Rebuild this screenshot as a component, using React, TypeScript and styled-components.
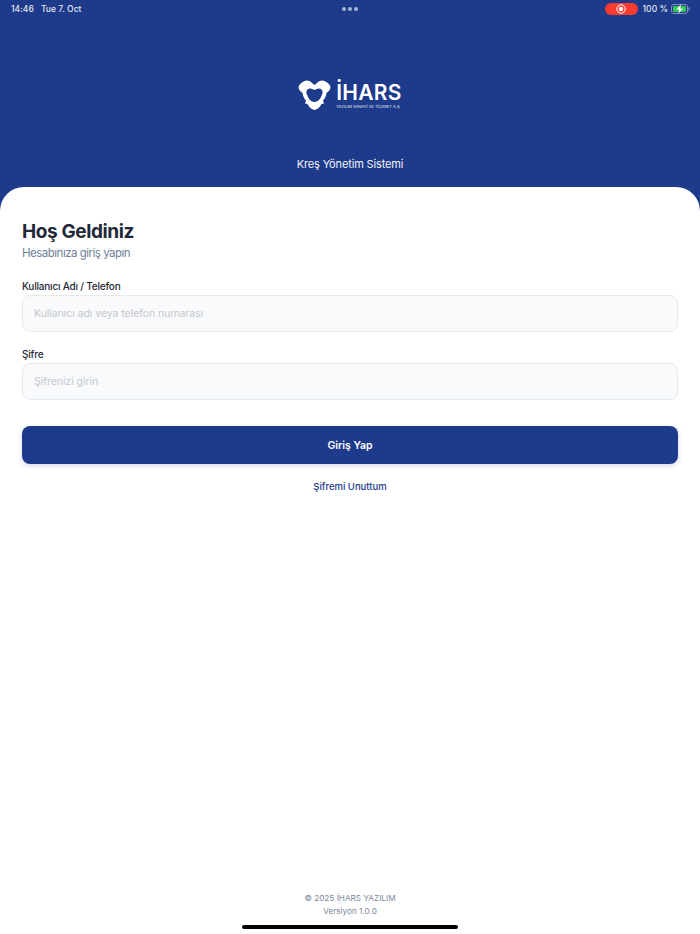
import React from "react";
import styled, { createGlobalStyle } from "styled-components";

const Global = createGlobalStyle`
  html, body { margin: 0; padding: 0; background: #fff; }
  * { box-sizing: border-box; }
  body { font-family: Inter, "Noto Sans", sans-serif; }
`;

const Page = styled.div`
  width: 700px; height: 934px; display: flex; flex-direction: column;
  background: #1e3a8a; overflow: hidden; position: relative;
`;
const StatusBar = styled.div`
  height: 17px; padding: 0 11px; display: grid; grid-template-columns: 1fr auto 1fr;
  align-items: center; color: #e3e7f2; font-size: 8.5px; font-weight: 500; letter-spacing: .05px;
`;
const StatusLeft = styled.div`display: flex; gap: 7px;`;
const StatusRight = styled.div`display: flex; align-items: center; justify-content: flex-end; margin-right: -1px;`;
const BatteryText = styled.span`margin: 0 3px 0 5px;`;
const Dots = styled.div`display: flex; gap: 2px;`;
const Dot = styled.span`width: 4px; height: 4px; border-radius: 50%; background: #aab5d6;`;
const Record = styled.div`
  width: 33px; height: 12px; border-radius: 6px; background: #fb3b30;
  display: flex; align-items: center; justify-content: center;
`;
const Header = styled.header`
  height: 170px; display: flex; flex-direction: column; align-items: center;
`;
const Logo = styled.div`display: flex; align-items: flex-start; gap: 5px; margin-top: 63px; height: 30px; color: #fff;`;
const WordBox = styled.div`display: flex; flex-direction: column; align-items: flex-start; margin-top: 2px;`;
const Word = styled.div`font-size: 21px; line-height: 21px; font-weight: 600; letter-spacing: .3px;`;
const Tagline = styled.div`font-size: 4px; line-height: 5px; margin-top: 1px; color: #e7eaf4; white-space: nowrap;`;
const Subtitle = styled.div`margin-top: 46px; font-size: 11px; line-height: 16px; color: #f1f3f9; letter-spacing: -.15px;`;
const Card = styled.main`
  flex: 1; background: #fff; border-radius: 24px 24px 0 0; padding: 32px 22px 0;
  display: flex; flex-direction: column;
`;
const Title = styled.h1`margin: 0; font-size: 19px; line-height: 26px; font-weight: 700; color: #1f2937; letter-spacing: -.4px;`;
const Sub = styled.p`margin: 0 0 18px; font-size: 11.5px; line-height: 16px; color: #70809a; letter-spacing: -.5px;`;
const Field = styled.div`margin-bottom: 15px;`;
const Label = styled.label`display: block; font-size: 10px; line-height: 14px; font-weight: 500; color: #1f2937; letter-spacing: -.2px; margin-bottom: 2px;`;
const Input = styled.input`
  display: block; width: 100%; height: 37px; padding: 0 11px; border: 1px solid #e5e9f0; border-radius: 8px;
  background: #f8fafc; font: 400 10.5px Inter, sans-serif; letter-spacing: -.05px; outline: none;
  &::placeholder { color: #c4c7cd; opacity: 1; }
`;
const Submit = styled.button`
  margin-top: 11px; height: 38px; border: 0; border-radius: 8px; background: #1e3a8a; color: #fff;
  font: 600 10.5px Inter, sans-serif; box-shadow: 0 2px 5px rgba(30,58,138,.2);
`;
const Forgot = styled.a`margin-top: 16px; text-align: center; font-size: 9.5px; line-height: 14px; font-weight: 500; color: #1e3a8a;`;
const Footer = styled.footer`
  margin-top: auto; padding-bottom: 16px; text-align: center; font-size: 8.2px; line-height: 13px; color: #7c879c;
`;
const HomeBar = styled.div`
  position: absolute; left: 242px; bottom: 5px; width: 216px; height: 4px; border-radius: 2px; background: #000;
`;

const LogoMark = () => (
  <svg width="33" height="30" viewBox="0 0 33 30" fill="#fff">
    <path
      fillRule="evenodd"
      d="M8.5 .5C11 .5 13 1.5 14.5 3.5L16.5 5L18.5 3.5C20 1.5 22 .5 24.5 .5C27.5 1 32 4 32.5 7C32.5 9.5 30.5 11.5 28.5 13C28 16 27 18.5 25 20.5L26 23.5L23.5 24C22 27 19.5 29.5 16.5 30C13.5 29.5 11 27 9.5 24L7 23.5L8 20.5C6 18.5 5 16 4.5 13C2.5 11.5 .5 9.5 .5 7C1 4 5.5 1 8.5 .5ZM16.5 10C14 8.5 11.5 8 9.5 9.5C8 11 8 13.5 9.5 15.5C10.5 19 13 22 16.5 22C20 22 22.5 19 23.5 15.5C25 13.5 25 11 23.5 9.5C21.5 8 19 8.5 16.5 10Z"
    />
  </svg>
);

const Battery = () => (
  <svg width="19" height="10" viewBox="0 0 19 10">
    <rect x=".5" y=".5" width="16" height="9" rx="2.5" fill="none" stroke="#7f8fc0" />
    <rect x="2" y="2" width="13" height="6" rx="1.2" fill="#34c759" />
    <rect x="17.4" y="3.2" width="1.4" height="3.6" rx=".7" fill="#7f8fc0" />
    <path d="M10 .2 L5.4 5.6 H8.2 L7.2 9.8 L12 4.4 H9.2 Z" fill="#fff" />
  </svg>
);

const RecordIcon = () => (
  <svg width="10" height="10" viewBox="0 0 10 10">
    <circle cx="5" cy="5" r="4.2" fill="none" stroke="#fff" strokeWidth="1" />
    <circle cx="5" cy="5" r="2.2" fill="#fff" />
  </svg>
);

export default function App() {
  return (
    <Page>
      <Global />
      <StatusBar>
        <StatusLeft><span>14:46</span><span>Tue 7. Oct</span></StatusLeft>
        <Dots><Dot /><Dot /><Dot /></Dots>
        <StatusRight>
          <Record><RecordIcon /></Record>
          <BatteryText>100 %</BatteryText>
          <Battery />
        </StatusRight>
      </StatusBar>
      <Header>
        <Logo>
          <LogoMark />
          <WordBox>
            <Word>İHARS</Word>
            <Tagline>YAZILIM SANAYİ VE TİCARET A.Ş.</Tagline>
          </WordBox>
        </Logo>
        <Subtitle>Kreş Yönetim Sistemi</Subtitle>
      </Header>
      <Card>
        <Title>Hoş Geldiniz</Title>
        <Sub>Hesabınıza giriş yapın</Sub>
        <Field>
          <Label>Kullanıcı Adı / Telefon</Label>
          <Input placeholder="Kullanıcı adı veya telefon numarası" />
        </Field>
        <Field>
          <Label>Şifre</Label>
          <Input placeholder="Şifrenizi girin" />
        </Field>
        <Submit>Giriş Yap</Submit>
        <Forgot>Şifremi Unuttum</Forgot>
        <Footer>© 2025 İHARS YAZILIM<br />Versiyon 1.0.0</Footer>
      </Card>
      <HomeBar />
    </Page>
  );
}
